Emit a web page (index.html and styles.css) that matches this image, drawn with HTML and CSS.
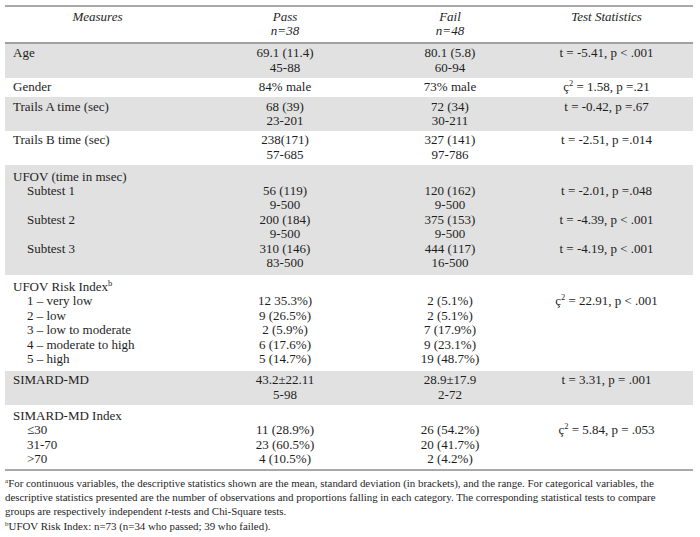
FILE: index.html
```html
<!DOCTYPE html>
<html>
<head>
<meta charset="utf-8">
<link rel="stylesheet" href="styles.css">
</head>
<body>
<div class="page">
<table class="stats">
  <colgroup>
    <col class="c1"><col class="c2"><col class="c3"><col class="c4">
  </colgroup>
  <thead>
    <tr>
      <th class="left-h">Measures</th>
      <th>Pass<br>n=38</th>
      <th>Fail<br>n=48</th>
      <th>Test Statistics</th>
    </tr>
  </thead>
  <tbody>
    <tr class="grey">
      <td class="label">Age</td>
      <td>69.1 (11.4)<br>45-88</td>
      <td>80.1 (5.8)<br>60-94</td>
      <td>t = -5.41, p &lt; .001</td>
    </tr>
    <tr>
      <td class="label">Gender</td>
      <td>84% male</td>
      <td>73% male</td>
      <td>ç<sup>2</sup> = 1.58, p =.21</td>
    </tr>
    <tr class="grey">
      <td class="label">Trails A time (sec)</td>
      <td>68 (39)<br>23-201</td>
      <td>72 (34)<br>30-211</td>
      <td>t = -0.42, p =.67</td>
    </tr>
    <tr>
      <td class="label">Trails B time (sec)</td>
      <td>238(171)<br>57-685</td>
      <td>327 (141)<br>97-786</td>
      <td>t = -2.51, p =.014</td>
    </tr>
    <tr class="grey tall">
      <td class="label">UFOV (time in msec)<br><span class="ind">Subtest 1</span><br><br><span class="ind">Subtest 2</span><br><br><span class="ind">Subtest 3</span><br>&nbsp;</td>
      <td><br>56 (119)<br>9-500<br>200 (184)<br>9-500<br>310 (146)<br>83-500</td>
      <td><br>120 (162)<br>9-500<br>375 (153)<br>9-500<br>444 (117)<br>16-500</td>
      <td><br>t = -2.01, p =.048<br><br>t = -4.39, p &lt; .001<br><br>t = -4.19, p &lt; .001<br>&nbsp;</td>
    </tr>
    <tr class="tall">
      <td class="label">UFOV Risk Index<sup>b</sup><br><span class="ind">1 – very low</span><br><span class="ind">2 – low</span><br><span class="ind">3 – low to moderate</span><br><span class="ind">4 – moderate to high</span><br><span class="ind">5 – high</span></td>
      <td><br>12 35.3%)<br>9 (26.5%)<br>2 (5.9%)<br>6 (17.6%)<br>5 (14.7%)</td>
      <td><br>2 (5.1%)<br>2 (5.1%)<br>7 (17.9%)<br>9 (23.1%)<br>19 (48.7%)</td>
      <td><br>ç<sup>2</sup> = 22.91, p &lt; .001<br><br><br><br>&nbsp;</td>
    </tr>
    <tr class="grey">
      <td class="label">SIMARD-MD</td>
      <td>43.2±22.11<br>5-98</td>
      <td>28.9±17.9<br>2-72</td>
      <td>t = 3.31, p = .001</td>
    </tr>
    <tr class="mid">
      <td class="label">SIMARD-MD Index<br><span class="ind">≤30</span><br><span class="ind">31-70</span><br><span class="ind">&gt;70</span></td>
      <td><br>11 (28.9%)<br>23 (60.5%)<br>4 (10.5%)</td>
      <td><br>26 (54.2%)<br>20 (41.7%)<br>2 (4.2%)</td>
      <td><br>ç<sup>2</sup> = 5.84, p = .053<br><br>&nbsp;</td>
    </tr>
  </tbody>
</table>
<div class="notes">
  <p><sup>a</sup>For continuous variables, the descriptive statistics shown are the mean, standard deviation (in brackets), and the range. For categorical variables, the<br>descriptive statistics presented are the number of observations and proportions falling in each category. The corresponding statistical tests to compare<br>groups are respectively independent <i>t</i>-tests and Chi-Square tests.</p>
  <p><sup>b</sup>UFOV Risk Index: n=73 (n=34 who passed; 39 who failed).</p>
</div>
</div>
</body>
</html>
```

FILE: styles.css
```css
html, body {
  margin: 0;
  padding: 0;
  background: #ffffff;
}
body {
  font-family: "Liberation Serif", "Times New Roman", serif;
  color: #1e1e1e;
}
.page {
  padding: 5px 7px 0 5px;
}
.stats {
  width: 688px;
  border-collapse: collapse;
  table-layout: fixed;
  font-size: 13px;
  line-height: 14.4px;
  border-top: 2px solid #a9a9a9;
  border-bottom: 2px solid #a9a9a9;
}
.c1 { width: 185px; }
.c2 { width: 190px; }
.c3 { width: 140px; }
.c4 { width: 173px; }
.stats th {
  font-weight: normal;
  font-style: italic;
  text-align: center;
  vertical-align: top;
  padding: 3px 0 3px 0;
  border-bottom: 2px solid #a0a0a0;
}
.stats td {
  text-align: center;
  vertical-align: top;
  padding: 2.5px 0;
}
.stats td.label {
  text-align: left;
  padding-left: 8px;
}
.stats tr.grey td {
  background: #e1e1e1;
}
.stats tr.tall td {
  padding-top: 5px;
  padding-bottom: 4.5px;
}
.stats tr.mid td {
  padding-top: 4px;
  padding-bottom: 2.5px;
}
.ind {
  padding-left: 14px;
}
sup {
  font-size: 0.65em;
  line-height: 0;
  vertical-align: 0.55em;
}
.notes {
  font-size: 10.9px;
  line-height: 14.3px;
  padding-top: 5px;
  white-space: nowrap;
  color: #1e1e1e;
}
.notes p {
  margin: 0;
}
```
